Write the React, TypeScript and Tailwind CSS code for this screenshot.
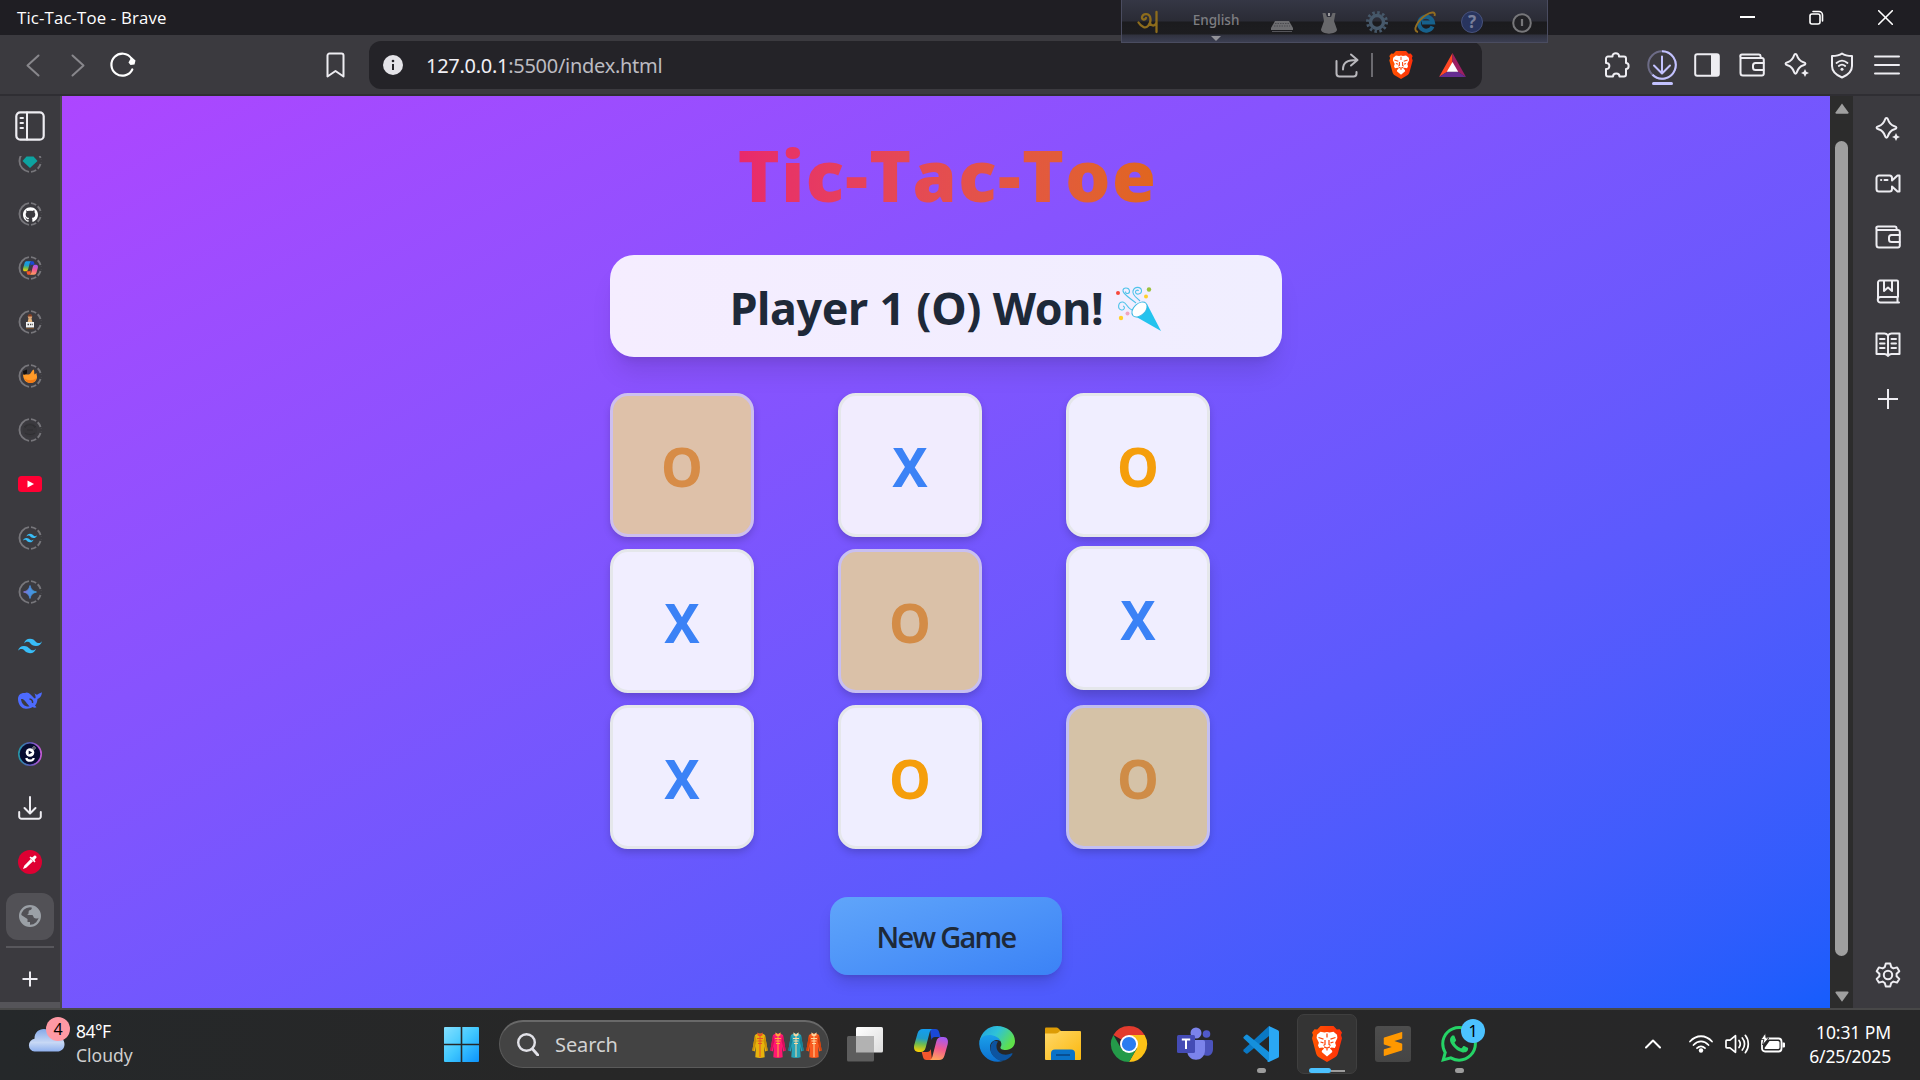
import React from "react";
import { SiGithub, SiTailwindcss, SiWhatsapp, SiSublimetext } from "react-icons/si";

type IconProps = { w: number; h: number; vb?: string; className?: string; children: React.ReactNode };

function Line({ w, h, vb, className = "", children }: IconProps) {
  return (
    <svg
      width={w}
      height={h}
      viewBox={vb ?? `0 0 ${w} ${h}`}
      preserveAspectRatio="none"
      fill="none"
      stroke="currentColor"
      strokeWidth={2}
      strokeLinecap="round"
      strokeLinejoin="round"
      className={`shrink-0 ${className}`}
    >
      {children}
    </svg>
  );
}

function Art({ w, h, vb, className = "", children }: IconProps) {
  return (
    <svg width={w} height={h} viewBox={vb ?? `0 0 ${w} ${h}`} className={`shrink-0 overflow-visible ${className}`}>
      {children}
    </svg>
  );
}

/* ---------- shared drawings ---------- */

function Lion({ w, h, id }: { w: number; h: number; id: string }) {
  return (
    <Art w={w} h={h} vb="0 0 30 36">
      <defs>
        <linearGradient id={id} x1="0" x2="1">
          <stop offset="0" stopColor="#ff5500" />
          <stop offset="1" stopColor="#ff2f0a" />
        </linearGradient>
      </defs>
      <path
        d="M8.5 0h13l3.3 3.6 2.7-.4 2.5 3.2-1 2.6 1 3.2-4.2 15.6c-.5 1.6-1.3 2.5-2.7 3.5L15 36l-8.1-4.7c-1.4-1-2.2-1.9-2.7-3.5L0 12.2 1 9 0 6.4l2.5-3.2 2.7.4z"
        fill={`url(#${id})`}
      />
      <path
        d="M5 8.8 8.5 5.7l4 .7L15 5.9l2.5.5 4-.7L25 8.8l.4 3.2-2.3 4.8.9 2.8-1.2 2.5-3.3-.7-1.7 1.2 2.2 1.9.3 1.6L15 30.4 9.7 26.1l.3-1.6 2.2-1.9-1.7-1.2-3.3.7L6 19.6l.9-2.8L4.6 12z"
        fill="#fff"
      />
      <path
        d="M6.5 11.5l5 1.600M23.5 11.5l-5 1.600M15 7.500v4M13 14v4.500l-1.500 1M17 14v4.500l1.500 1M12 20.800l3 1.200 3-1.200M15 22v2.500M8.500 16l3 .9M21.500 16l-3 .9"
        stroke="#ff4a10"
        strokeWidth="1.3"
        fill="none"
      />
    </Art>
  );
}

const Sparkle = ({ s = 26 }: { s?: number }) => (
  <Line w={s} h={s} vb="0 0 26 26">
    <path d="M11.500 2c.7 0 1.200.5 1.500 1.500C14.200 7.500 15.500 9 19.500 10.200c2.600.7 2.600 2.300 0 3-4 1.200-5.300 2.700-6.500 6.700-.7 2.300-2.300 2.300-3 0-1.200-4-2.500-5.500-6.500-6.700-2.600-.7-2.600-2.300 0-3C7.500 9 8.800 7.500 10 3.500 10.300 2.500 10.800 2 11.500 2z" />
    <path d="M21 17l1.300 2.800L25 21l-2.700 1.300L21 25l-1.300-2.700L17 21l2.700-1.200z" fill="currentColor" stroke="none" />
  </Line>
);

const Wallet = () => (
  <Line w={26} h={24}>
    <path d="M1.500 4v16a2.500 2.500 0 0 0 2.500 2.500h19a1.800 1.800 0 0 0 1.800-1.800V6.800A1.800 1.800 0 0 0 23 5H3A1.600 1.600 0 0 1 3 1.500h17A1.800 1.800 0 0 1 21.600 3.300V5" />
    <path d="M24.500 10h-8a2.500 2.500 0 0 0-2.500 2.500v2a2.500 2.500 0 0 0 2.500 2.500h8" />
  </Line>
);

const Ring = ({ children }: { children?: React.ReactNode }) => (
  <Art w={24} h={24}>
    <path d="M11 1.100A11 11 0 0 0 11 22.900" fill="none" stroke="#77767b" strokeWidth="1.9" />
    <path d="M13 1.100A11 11 0 0 1 22.900 11" fill="none" stroke="#77767b" strokeWidth="1.9" strokeDasharray="5.500 2" />
    <path d="M13 22.900A11 11 0 0 0 22.900 13" fill="none" stroke="#77767b" strokeWidth="1.9" strokeDasharray="5.500 2" />
    {children}
  </Art>
);

const CopilotShape = ({ w, h, id }: { w: number; h: number; id: string }) => (
  <Art w={w} h={h} vb="0 0 34 31">
    <defs>
      <linearGradient id={`${id}a`} x1="0.400" y1="0" x2="0.300" y2="1">
        <stop offset="0" stopColor="#149df0" />
        <stop offset=".4" stopColor="#1f9ccb" />
        <stop offset=".65" stopColor="#6cbb52" />
        <stop offset="1" stopColor="#ffd000" />
      </linearGradient>
      <linearGradient id={`${id}b`} x1="0.600" y1="0" x2="0.400" y2="1">
        <stop offset="0" stopColor="#a259f5" />
        <stop offset=".5" stopColor="#f25a90" />
        <stop offset="1" stopColor="#ffa35c" />
      </linearGradient>
    </defs>
    <path d="M16 0h5.500c2 0 3 1.200 3.600 3l1.400 5H21c-2 0-3 1-3.600 3z" fill="#1b48d6" />
    <path d="M18 31h-5.500c-2 0-3-1.200-3.500-3l-1.300-5H13c2 0 3.200-1.200 3.800-3z" fill="#f4572d" />
    <path d="M9 0h10c-2 0-2.800 1.500-3.400 3.500L11.700 18.500c-.8 2.900-2.200 4.500-5.200 4.500H4.500C.5 23-.6 19.500.3 15.800L3.500 4.500C4.400 1.500 6 0 9 0z" fill={`url(#${id}a)`} />
    <path d="M25 31H15c2 0 2.800-1.500 3.400-3.500L22.300 12.500c.8-2.900 2.200-4.500 5.200-4.500h2c4 0 5.100 3.500 4.200 7.200L30.500 26.500C29.600 29.500 28 31 25 31z" fill={`url(#${id}b)`} />
  </Art>
);

/* ---------- title bar ---------- */

function LanguageBar() {
  return (
    <div className="absolute left-[1121px] top-0 z-10 h-[43px] w-[427px] border border-t-0 border-[#4a4c60] bg-[linear-gradient(180deg,#353745_0px,#2a2b35_21px,#1b1b1e_22px,#1d1d20_34px,#30323f_35px,#3d4054_43px)]">
      <div className="flex h-full items-start text-[#7e7e82]">
        <Art w={22} h={22} className="ml-[15px] mt-[11px]">
          <path d="M5 6C6 2 13 1.500 13.500 8c.3 6-4 9.500-7 8-2-1-3.500-2-5-4.500M13.500 13c3 3 5 1 6-1.500M5 6c-.5 3 3.500 3.500 4 .8M19.500 1v20" fill="none" stroke="#8d6c1c" strokeWidth="2.300" strokeLinecap="round" />
        </Art>
        <div className="ml-[34px] flex w-[46px] flex-col items-center">
          <span className="mt-[10px] whitespace-nowrap font-['Noto_Sans',sans-serif] text-[13.500px] leading-[20px] font-medium">English</span>
          <Art w={10} h={5} className="mt-[6px]"><path d="M0 0h10L5 5z" fill="#929298" /></Art>
        </div>
        <Art w={22} h={11} className="ml-[32px] mt-[21px]">
          <path d="M4 0h14l4 7v2H0V7z" fill="#6d6d70" />
          <path d="M1 10.500h20" stroke="#55555a" />
          <path d="M4 2.500h14M3 5h16" stroke="#4b4b4f" strokeDasharray="1.500 1" />
        </Art>
        <Art w={16} h={21} className="ml-[28px] mt-[13px]">
          <path d="M1.500 0h3l1.500 4h4l1.500-4h3L13 8l3 8.500c0 5.500-16 5.500-16 0L3 8z" fill="#68686b" />
          <path d="M7 0h2v3H7z" fill="#9c9c9f" />
        </Art>
        <Art w={22} h={22} className="ml-[29px] mt-[11px]">
          <circle cx="11" cy="11" r="6.500" fill="none" stroke="#46586a" strokeWidth="3.500" />
          <circle cx="11" cy="11" r="9.500" fill="none" stroke="#46586a" strokeWidth="3" strokeDasharray="2.500 2.470" />
        </Art>
        <Art w={24} h={22} className="ml-[26px] mt-[11px]">
          <path d="M18.500 15.500A7 7 0 1 1 19 11.500H8" fill="none" stroke="#17618c" strokeWidth="4" />
          <path d="M4 21C-2 20 3 10 12 4c6-4 10-3 8.500 1" fill="none" stroke="#936d20" strokeWidth="1.900" />
        </Art>
        <div className="ml-[23px] mt-[11px] flex h-[22px] w-[22px] items-center justify-center rounded-full border border-[#47527c] bg-[#28345e] font-['Noto_Sans',sans-serif] text-[17px] font-bold text-[#7a809c]">?</div>
        <Art w={20} h={20} className="ml-[29px] mt-[13px]">
          <circle cx="10" cy="10" r="8.800" fill="#222226" stroke="#77777a" strokeWidth="2" />
          <path d="M10 6v7" stroke="#77777a" strokeWidth="2.200" />
        </Art>
      </div>
    </div>
  );
}

function TitleBar() {
  return (
    <div className="flex h-[35px] shrink-0 items-center bg-[#1f1e23] text-white">
      <span className="ml-[17px] flex-1 font-['Open_Sans',sans-serif] text-[16.800px] leading-[35px] tracking-[0.150px]">Tic-Tac-Toe - Brave</span>
      <div className="mr-[27px] flex items-center gap-[54px]">
        <Line w={15} h={15}><path d="M0 7h15" strokeLinecap="butt" /></Line>
        <Line w={15} h={15}>
          <rect x="1" y="4" width="10" height="10" rx="2" strokeWidth="1.600" />
          <path d="M4 1.500h6a3.500 3.500 0 0 1 3.500 3.500v6" strokeWidth="1.600" />
        </Line>
        <Line w={15} h={15}><path d="M.7.7l13.600 13.600M14.300.7L.7 14.300" strokeWidth="1.600" /></Line>
      </div>
    </div>
  );
}

/* ---------- toolbar ---------- */

function Toolbar() {
  return (
    <div className="flex h-[61px] shrink-0 items-center border-b-2 border-[#2f2e33] bg-[#3b3a3f] pt-px text-[#eeedf2]">
      <Line w={14} h={23} className="ml-[26px] text-[#88878c]"><path d="M12.500 1.500L1.500 11.500l11 10" /></Line>
      <Line w={14} h={23} className="ml-[31px] text-[#88878c]"><path d="M1.500 1.500l11 10-11 10" /></Line>
      <Art w={26} h={25} className="ml-[25px] -mt-px text-white">
        <path d="M22.300 17.500A11 11 0 1 1 21.500 6.500" fill="none" stroke="#fff" strokeWidth="2.200" strokeLinecap="round" />
        <path d="M18.500 10.500l3-5.500 4 3.500-1 4-4 .5z" fill="#fff" />
      </Art>
      <Line w={19} h={26} className="ml-[190px]"><path d="M1.500 3.500a2 2 0 0 1 2-2h12a2 2 0 0 1 2 2V24.500L9.500 19l-8 5.500z" /></Line>
      <div className="ml-[24px] flex h-[48px] w-[1113px] items-center rounded-[12px] bg-[#242328]">
        <Art w={20} h={20} className="ml-[14px]">
          <circle cx="10" cy="10" r="10" fill="#e4e3e8" />
          <path d="M10 9v6" stroke="#242328" strokeWidth="2" />
          <circle cx="10" cy="6" r="1.300" fill="#242328" />
        </Art>
        <span className="ml-[23px] mt-px flex-1 font-['Noto_Sans',sans-serif] text-[20px] leading-[30px] tracking-[-0.280px] text-[#bcbbc1]">
          <span className="text-[#f0eff4]">127.0.0.1</span>:5500/index.html
        </span>
        <Line w={24} h={25} className="text-[#b9b8bd]">
          <path d="M1.500 8v12.500a3 3 0 0 0 3 3h14a3 3 0 0 0 3-3V19M8 16.500C8 9.500 12 7 22 7M16 1.500L22.500 7 16 12.500" />
        </Line>
        <div className="ml-[12px] h-[24px] w-[2px] bg-[#6b6a70]" />
        <div className="ml-[16px]"><Lion w={24} h={28} id="lion-bar" /></div>
        <Art w={27} h={24} className="ml-[26px] mr-[16px]">
          <path d="M13.500 0L0 24l13.500-8.500z" fill="#ff4724" />
          <path d="M13.500 0L27 24l-13.500-8.500z" fill="#9e1f63" />
          <path d="M0 24h27l-8.500-5.500h-10z" fill="#662d91" />
          <path d="M13.500 9l5.700 9.700H7.800z" fill="#fff" />
        </Art>
      </div>
      <div className="ml-[122px] flex items-center">
        <Line w={26} h={26}>
          <path d="M2 6.500a2 2 0 0 1 2-2h4.500C8 0 15.500 0 15 4.500H20a2 2 0 0 1 2 2V11c3.500 0 3.500 6 0 6v5.500a2 2 0 0 1-2 2h-4.500c0-4-6.500-4-6.500 0H4a2 2 0 0 1-2-2V17c4.500.5 4.500-6.500 0-6z" />
        </Line>
        <div className="ml-[17px] mt-[5px] flex flex-col items-center">
          <Line w={30} h={30} className="text-[#c3c2ff]">
            <circle cx="15" cy="15" r="13.700" stroke="#6d6c87" />
            <path d="M15 1.300a13.700 13.700 0 1 1-9.500 23.500" strokeLinecap="butt" />
            <path d="M15 6.500v16.500M7 15.500l8 8 8-8" />
          </Line>
          <div className="mt-[2px] h-[3px] w-[21px] rounded bg-[#c3c2ff]" />
        </div>
        <Line w={26} h={24} className="ml-[17px]">
          <rect x="1.200" y="1.200" width="23.600" height="21.600" rx="2" />
          <path d="M17 1h8v22h-8z" fill="currentColor" stroke="none" />
        </Line>
        <div className="ml-[19px]"><Wallet /></div>
        <div className="ml-[19px]"><Sparkle /></div>
        <Line w={24} h={27} className="ml-[20px]">
          <path d="M12 1.500c2.500 1.800 6.500 2.500 10 2.500v10c0 5.500-4 9-10 11.500C6 23 2 19.500 2 14V4c3.500 0 7.500-.7 10-2.500z" />
          <path d="M6.500 11c3.500-3 7.500-3 11 0M8.800 14c2-1.700 4.400-1.700 6.400 0" strokeWidth="1.800" />
          <circle cx="12" cy="17.200" r="1.500" fill="currentColor" stroke="none" />
        </Line>
        <Line w={26} h={20} className="ml-[20px]"><path d="M1 1.500h24M1 10h24M1 18.500h24" /></Line>
      </div>
    </div>
  );
}

/* ---------- left vertical tabs ---------- */

function Tab({ children }: { children: React.ReactNode }) {
  return <div className="flex h-[54px] w-full shrink-0 items-center justify-center">{children}</div>;
}

function LeftTabs() {
  return (
    <div className="flex w-[62px] shrink-0 flex-col border-r-2 border-[#49484d] bg-[#3b3a3f] text-[#eeedf2]">
      <div className="flex h-[59px] shrink-0 justify-center pt-[15px]">
        <Line w={30} h={30}>
          <rect x="1.300" y="1.300" width="27.400" height="27.400" rx="4" strokeWidth="2.200" />
          <path d="M12 1.500v27M5.500 7h2.500M5.500 12h2.500M5.500 17h2.500" />
        </Line>
      </div>
      <div className="flex h-[33px] shrink-0 items-end justify-center overflow-hidden">
        <div className="mb-[15px] h-[17px] overflow-hidden">
          <div className="-mt-[7px]">
            <Ring><path d="M12 19L4.500 12 8.500 7.500h7l4 4.500z" fill="#0da3a0" /></Ring>
          </div>
        </div>
      </div>
      <div className="-mt-[1px] flex flex-col">
        <Tab><Ring><foreignObject x="4.500" y="4.500" width="15" height="15"><SiGithub size={15} color="#fff" /></foreignObject></Ring></Tab>
        <Tab>
          <div className="relative"><Ring /><div className="absolute inset-0 flex items-center justify-center"><CopilotShape w={15} h={14} id="cpt" /></div></div>
        </Tab>
        <Tab>
          <Ring>
            <circle cx="12" cy="6.800" r="2.200" fill="#e0a878" />
            <path d="M9.800 6.500c0-3.500 4.400-3.500 4.400 0z" fill="#7b3b22" />
            <path d="M10.500 8.500h3l1 4h-5z" fill="#e2b27c" />
            <path d="M8 12h8v5.500H8z" fill="#f2f2f2" />
            <path d="M9.500 14.500h1.500m1 0h1m.7 0h1" stroke="#444" strokeWidth="1.500" />
            <path d="M8 18.500h8" stroke="#6d4a2c" strokeWidth="1.200" />
          </Ring>
        </Tab>
        <Tab>
          <Ring>
            <path d="M5 10c0 5 2.500 9 7.500 9 4 0 6.500-2.800 6.500-6 0-1.500-.5-2-.5-4l-2 1.500c-.5-2 0-3.500-.7-5-2 .7-2.300 3-3.800 4.500-2 1-4.500.5-7 0z" fill="#ff9a28" />
            <path d="M5 7l4-1.500v4L5.500 11z" fill="#111" />
            <path d="M6.500 14c3 3 8 3 12 0-1 3-3 5-6 5-3 0-5-2-6-5z" fill="#f47b16" />
          </Ring>
        </Tab>
        <Tab>
          <Ring>
            <circle cx="12" cy="12" r="7" fill="#38373b" />
            <path d="M6 9c3-3 9-3 12 0M9 12h6M7 15c3 2 7 2 10 0M9 7l-2 3M15 7l2 3" stroke="#2f2f32" fill="none" />
          </Ring>
        </Tab>
        <Tab>
          <Art w={24} h={16}><rect width="24" height="16" rx="3.500" fill="#ff0033" /><path d="M9.500 4.500l6.500 3.500-6.500 3.500z" fill="#fff" /></Art>
        </Tab>
        <Tab><div className="relative"><Ring /><SiTailwindcss size={14} className="absolute left-[5px] top-[5px] text-[#38bdf8]" /></div></Tab>
        <Tab>
          <Ring>
            <defs><linearGradient id="gem" x1="0" x2="1"><stop offset="0" stopColor="#8a72d8" /><stop offset=".5" stopColor="#4a8fe0" /><stop offset="1" stopColor="#3aa0dc" /></linearGradient></defs>
            <path d="M12 5.500c1 4 2.500 5.500 6.500 6.500-4 1-5.500 2.500-6.500 6.500-1-4-2.500-5.500-6.500-6.500 4-1 5.500-2.500 6.500-6.500z" fill="url(#gem)" stroke="url(#gem)" strokeWidth=".8" />
          </Ring>
        </Tab>
        <Tab><SiTailwindcss size={24} className="text-[#38bdf8]" /></Tab>
        <Tab>
          <Art w={24} h={18}>
            <path d="M0 8C0 3.500 3.500 1.500 7 2c2-1.300 4 0 5 1 3 2.500 3.500 4 5 4.500C18.500 7 17 4 16.500 2c1.500 2 3 2.200 4.500.5 1-.3 2-.7 3-1.200-.3 4-2.500 6.300-4.500 6.700-.2 3-1 5-2.500 6.500l1.500 1.800c-1.500.7-3 .2-4-.3-2 1.500-5 2-8 1.500C3 17 0 13 0 8z" fill="#4d6bfe" />
            <path d="M3 8c3-.5 4.500 2.500 6.500 5l2 2.500c-4.500.5-8-2.500-8.500-7.500z" fill="#3b3a3f" />
            <path d="M11.500 8c2 .3 3.500 1.800 3 4" fill="none" stroke="#3b3a3f" strokeWidth="1.500" />
          </Art>
        </Tab>
        <Tab>
          <Art w={24} h={24}>
            <defs><linearGradient id="gring" x1="0" x2="1"><stop offset="0" stopColor="#2595a8" /><stop offset=".5" stopColor="#5a56b8" /><stop offset="1" stopColor="#c45ad8" /></linearGradient></defs>
            <circle cx="12" cy="12" r="11.200" fill="#070b30" stroke="url(#gring)" strokeWidth="1.600" />
            <circle cx="12" cy="10.500" r="4.300" fill="#fff" />
            <path d="M10.700 8.500l3.500 2-3.500 2z" fill="#070b30" />
            <path d="M8.300 16c.5 3.600 7 3.600 7.400 0" fill="none" stroke="#fff" strokeWidth="2.200" />
            <circle cx="16" cy="6" r="1.300" fill="none" stroke="#999" />
          </Art>
        </Tab>
        <Tab><Line w={24} h={24}><path d="M12 1v16M6.500 12l5.500 5.500 5.500-5.500M1.200 16v4.500a2.300 2.300 0 0 0 2.300 2.300h17a2.300 2.300 0 0 0 2.300-2.300V16" /></Line></Tab>
        <Tab>
          <Art w={24} h={24}>
            <circle cx="12" cy="12" r="12" fill="#de0032" />
            <path d="M5 19l1.200-3.200 6.500-6.800 2.300 2.300-6.800 6.500z" fill="#fff" />
            <path d="M11.500 7.500l5 5 1-1-1-1.500 2.300-3-1.800-1.800-3 2.300-1.500-1z" fill="#fff" />
          </Art>
        </Tab>
        <Tab>
          <div className="flex h-[47px] w-[48px] items-center justify-center rounded-[12px] bg-[#525156]">
            <Art w={22} h={22}>
              <circle cx="11" cy="11" r="9.900" fill="none" stroke="#9ba0a6" strokeWidth="2.200" />
              <path d="M13 1.500c0 2.500-.5 3.500-3 4C9 7.500 10.500 9 8 10h5.500c1.500 2 .5 3 3.500 3.500 2 0 3.500-.5 4-2.500C21 5.500 18 2 13 1.500zM1.500 9.500L8.500 14v3h2.500v3.800C5 21 .5 16 1.500 9.500z" fill="#9ba0a6" />
            </Art>
          </div>
        </Tab>
      </div>
      <div className="ml-[6px] mt-[3px] h-[2px] w-[48px] shrink-0 bg-[#58575c]" />
      <div className="flex flex-1 items-center justify-center pb-[9px]">
        <Line w={16} h={16} className="mt-[16px]"><path d="M8 .5v15M.5 8h15" strokeLinecap="butt" /></Line>
      </div>
      <div className="h-[6px] w-full shrink-0 bg-[#555459]" />
    </div>
  );
}

/* ---------- game ---------- */

type Mark = "X" | "O";
const cells: { mark: Mark; cls: string }[] = [
  { mark: "O", cls: "bg-[#dec1a9] border-[#cdbfef] text-[#d78c47]" },
  { mark: "X", cls: "bg-[#f1ecfe] border-[#e5e7eb] text-[#3b82f6]" },
  { mark: "O", cls: "bg-[#f0eeff] border-[#e5e7eb] text-[#f59e0b]" },
  { mark: "X", cls: "bg-[#f1eeff] border-[#e5e7eb] text-[#3b82f6]" },
  { mark: "O", cls: "bg-[#dac1a8] border-[#c8bff1] text-[#d38c47]" },
  { mark: "X", cls: "bg-[#f0eeff] border-[#e5e7eb] text-[#3b82f6] -translate-y-[3px] shadow-[0_8px_14px_-2px_rgba(0,0,0,0.22)]" },
  { mark: "X", cls: "bg-[#f0eeff] border-[#e5e7eb] text-[#3b82f6]" },
  { mark: "O", cls: "bg-[#efeeff] border-[#e5e7eb] text-[#f59e0b]" },
  { mark: "O", cls: "bg-[#d5c2a7] border-[#c3bff2] text-[#cf8c47]" },
];

const PartyPopper = () => (
  <Art w={46} h={46} className="mt-[5px]">
    <g fill="none" stroke="#4ec3ea" strokeWidth="1.100">
      <path d="M20 17C14 12 8 9 7 5c-.5-4 6-4 6.500 0 .3 3-4 3.500-4 .5" />
      <path d="M24 15c-4-4-8-6-7-10 1.500-5 8-4.500 8.500-.5.300 4-6 5-6 1.500 0-2 2.500-2.500 3-1" />
      <path d="M17 24C12 24 11 17 7 16c-5-.5-6 7-1.500 8 3 .5 4-3.500 1.500-4" />
    </g>
    <path d="M17 29L31 18l14 27z" fill="#23c3ee" />
    <ellipse cx="23.500" cy="23.500" rx="9" ry="5.800" transform="rotate(-44 23.500 23.500)" fill="#fff" stroke="#3cb9e3" strokeWidth="1" />
    <circle cx="2" cy="7" r="2" fill="#f7483c" />
    <circle cx="33" cy="3.500" r="2.200" fill="#9bc13c" />
    <circle cx="30" cy="10.500" r="2" fill="#ffd02b" />
    <circle cx="11.500" cy="27.500" r="2" fill="#f0a5c0" />
    <circle cx="5" cy="32" r="2.200" fill="#ffd02b" />
  </Art>
);

function Game() {
  return (
    <div className="flex flex-1 flex-col items-center overflow-hidden bg-linear-to-br from-[#ad46ff] to-[#155dfc] font-['Noto_Sans',sans-serif]">
      <h1 className="mt-[43px] bg-linear-to-r from-[#e8286c] to-[#e0661c] bg-clip-text pl-[3px] font-['Open_Sans',sans-serif] text-[71px] leading-[72px] font-extrabold tracking-[1.400px] text-transparent">
        Tic-Tac-Toe
      </h1>
      <div className="mt-[44px] flex h-[102px] w-[672px] shrink-0 items-center justify-center gap-[13px] rounded-[24px] bg-linear-to-r from-[#f5edff] to-[#f0eeff] text-[#1e2939] shadow-[0_20px_25px_-5px_rgba(0,0,0,0.1),0_8px_10px_-6px_rgba(0,0,0,0.1)]">
        <span className="mt-[4px] text-[44.800px] leading-[50px] font-bold tracking-[-0.400px] [word-spacing:0.500px]">Player 1 (O) Won!</span>
        <PartyPopper />
      </div>
      <div className="mt-[36px] grid w-[672px] shrink-0 grid-cols-3 gap-3">
        {cells.map((c, i) => (
          <div
            key={i}
            className={`flex h-[144px] w-[144px] items-center justify-center rounded-[18px] border-[3px] text-[53px] leading-[60px] font-bold shadow-[0_4px_8px_-1px_rgba(0,0,0,0.2)] ${c.cls}`}
          >
            <span className="mt-[4px]">{c.mark}</span>
          </div>
        ))}
      </div>
      <button className="mt-[48px] h-[78px] w-[232px] shrink-0 rounded-[18px] bg-linear-to-br from-[#60a5fa] to-[#3b82f6] pt-[2px] font-['Open_Sans',sans-serif] text-[29px] leading-[40px] font-semibold tracking-[-1.750px] text-[#1e2939] shadow-[0_10px_15px_-3px_rgba(0,0,0,0.15),0_4px_6px_-4px_rgba(0,0,0,0.15)]">
        New Game
      </button>
    </div>
  );
}

function ScrollBar() {
  return (
    <div className="flex w-[23px] shrink-0 flex-col items-center bg-[#2c2c2c] pt-[7px] pb-[6px]">
      <Art w={14} h={11}><path d="M7 .5L13.500 9.500q.3 1.300-1 1.300H1.500q-1.300 0-1-1.300z" fill="#9f9f9f" /></Art>
      <div className="mt-[27px] h-[815px] w-[13px] rounded-full bg-[#9f9f9f]" />
      <Art w={14} h={11} className="mt-auto"><path d="M7 10.800L.5 1.800Q.2.500 1.500.500h11q1.300 0 1 1.300z" fill="#9f9f9f" /></Art>
    </div>
  );
}

/* ---------- right sidebar ---------- */

function RightBar() {
  return (
    <div className="flex w-[67px] shrink-0 flex-col items-center bg-[#3b3a3f] pt-[6px] pl-[2px] text-[#eeedf2]">
      <Tab><Sparkle /></Tab>
      <Tab>
        <Line w={26} h={19}>
          <path d="M1.500 4A2.500 2.500 0 0 1 4 1.500h10.500A2.500 2.500 0 0 1 17 4v2.500l5.500-5h2v16h-2L17 12.500V15a2.500 2.500 0 0 1-2.500 2.500H4A2.500 2.500 0 0 1 1.500 15z" />
          <path d="M6 6h.3M9.500 6h3" />
        </Line>
      </Tab>
      <Tab><Wallet /></Tab>
      <Tab>
        <Line w={24} h={25}>
          <path d="M2 20.500v-17a2 2 0 0 1 2-2h17a1 1 0 0 1 1 1V18H4.500a2.500 2.500 0 0 0 0 5.500H23M21.500 18v5.500M8 1.500V12l4-3.500 4 3.500V1.500" />
        </Line>
      </Tab>
      <Tab>
        <Line w={26} h={26}>
          <path d="M13 3.500C12 2 11 1.500 9.500 1.500H1.500V22h8c1.500 0 2.500.5 3.500 2 1-1.500 2-2 3.500-2h8V1.500h-8c-1.500 0-2.500.5-3.500 2zM13 3.500V24" />
          <path d="M5 7h4.500M5 11.500h4.500M5 16h4.500M16.500 7H21M16.500 11.500H21M16.500 16H21" />
        </Line>
      </Tab>
      <Tab><Line w={20} h={20}><path d="M10 .5v19M.5 10h19" /></Line></Tab>
      <div className="mt-auto mb-[20px]">
        <Line w={26} h={26}>
          <path d="M10.800 1.500h4.400l1 3.600 2.200 1.300 3.700-1 2.200 3.800-2.700 2.600v2.500l2.700 2.600-2.200 3.700-3.700-1-2.200 1.400-1 3.500h-4.400l-1-3.500-2.200-1.400-3.700 1-2.200-3.700 2.700-2.600v-2.500L1.700 9.200l2.200-3.800 3.700 1 2.200-1.300z" />
          <circle cx="13" cy="13" r="4.200" />
        </Line>
      </div>
    </div>
  );
}

/* ---------- taskbar ---------- */

function Slot({ children, dot = false }: { children: React.ReactNode; dot?: boolean }) {
  return (
    <div className="flex h-full w-[66px] shrink-0 flex-col items-center pt-[16px]">
      <div className="flex h-[36px] items-center">{children}</div>
      {dot && <div className="mt-[6px] h-[5px] w-[9px] rounded-full bg-[#9c9c9c]" />}
    </div>
  );
}

const coats = [
  ["#e8b30c", "#c98f08", "#e8502a"],
  ["#ff1772", "#d60f5c", "#ffb03a"],
  ["#28a3b8", "#177f94", "#ffd9a0"],
  ["#fa5a1e", "#d1400c", "#ffd9a0"],
];

const Coat = ({ c }: { c: string[] }) => (
  <Art w={16} h={26}>
    <path d="M5.500 1.500L3 3 .3 18.500l2.500 1L4 14l-.7 11.300c3 .9 6.400.9 9.400 0L12 14l1.200 5.500 2.500-1L13 3l-2.500-1.500z" fill={c[0]} />
    <path d="M3 3L.3 18.500l1.300.5L4.500 9zM13 3l2.700 15.500-1.300.5L11.500 9z" fill={c[1]} />
    <path d="M5.500.3L8 2.500 10.500.3v3L8 4.500 5.500 3.300zM7.500 4h1v21h-1zM5 6h6v.9H5zM5.500 8.500h5v.9h-5zM6 11h4v.9H6z" fill={c[2]} />
  </Art>
);

function Taskbar() {
  return (
    <div className="flex h-[72px] shrink-0 border-t-2 border-[#484848] bg-linear-to-r from-[#25282a] via-[#272727] via-30% to-[#272728] font-['Noto_Sans',sans-serif] text-white">
      <div className="relative flex w-[428px] shrink-0">
        <Art w={37} h={24} className="ml-[28px] mt-[18px]">
          <defs><linearGradient id="cloud" x1="0" y1="0" x2="0" y2="1"><stop offset="0" stopColor="#84a8e8" /><stop offset=".6" stopColor="#c7d8f5" /><stop offset="1" stopColor="#8fb0ee" /></linearGradient></defs>
          <path d="M6.500 23.500a6.400 6.400 0 0 1 0-12.700C6.500 4.500 10.500 1 16 1c5.500 0 9 3.500 9.500 8.500 1-.4 2-.5 3.500-.5 4.500 0 7.500 3 7.500 7.200s-3 7.300-7.500 7.300z" fill="url(#cloud)" />
        </Art>
        <div className="absolute left-[46px] top-[7px] flex h-[24px] w-[24px] items-center justify-center rounded-full bg-[#ff99a4] text-[16px] leading-none text-black">4</div>
        <div className="ml-[11px] mt-[9px] text-[17.500px] leading-[24px]">
          <div className="tracking-[-0.500px]">84°F</div>
          <div className="text-[#cfcfcf]">Cloudy</div>
        </div>
      </div>
      <Slot>
        <Art w={35} h={35}>
          <defs><linearGradient id="win" x1="0" y1="0" x2="1" y2="1"><stop offset="0" stopColor="#84e0ff" /><stop offset=".5" stopColor="#40c8ff" /><stop offset="1" stopColor="#0c93fb" /></linearGradient></defs>
          <path d="M1 0h15.700v16.700H0V1q0-1 1-1zM18.300 0H34q1 0 1 1v15.700H18.300zM0 18.300h16.700V35H1q-1 0-1-1zM18.300 18.300H35V34q0 1-1 1H18.300z" fill="url(#win)" />
        </Art>
      </Slot>
      <div className="ml-[5px] mt-[10px] flex h-[48px] w-[330px] shrink-0 items-center rounded-full border border-t-2 border-[#5a5a5a] border-t-[#696969] bg-[#434343]">
        <Line w={22} h={23} className="ml-[17px] text-[#e2e2e8]"><circle cx="9.500" cy="9.500" r="8.300" strokeWidth="2.400" /><path d="M15.500 16l5.300 6" strokeWidth="2.800" /></Line>
        <span className="ml-[16px] flex-1 text-[20px] leading-[28px] tracking-[-0.100px] text-[#d2d2d2]">Search</span>
        <div className="mr-[6px] mt-[1px] flex gap-[2px]">{coats.map((c, i) => <Coat key={i} c={c} />)}</div>
      </div>
      <div className="ml-[3px] flex">
        <Slot>
          <Art w={36} h={35}>
            <defs><linearGradient id="tv" x1="0" y1="0" x2="1" y2="1"><stop offset="0" stopColor="#fff" /><stop offset="1" stopColor="#dcdcdc" /></linearGradient></defs>
            <rect x="9" y="0" width="27" height="25.500" rx="1.500" fill="url(#tv)" />
            <rect x="0" y="9" width="27" height="25.500" rx="1.500" fill="#5d5d5d" />
            <path d="M9 9h18v16.500H9z" fill="#b2b2b2" />
          </Art>
        </Slot>
        <Slot><CopilotShape w={34} h={31} id="cp" /></Slot>
        <Slot>
          <Art w={36} h={36}>
            <defs>
              <linearGradient id="e1" x1="0" y1="0" x2="1" y2=".5"><stop offset="0" stopColor="#1f9fe0" /><stop offset=".5" stopColor="#2fc2d8" /><stop offset="1" stopColor="#5fe04a" /></linearGradient>
              <linearGradient id="e2" x1="0" y1="0" x2="0" y2="1"><stop offset="0" stopColor="#1ba0ea" /><stop offset="1" stopColor="#0c6fcf" /></linearGradient>
            </defs>
            <path d="M.3 16C2 6.500 9 0 18 0c10 0 18 6.500 18 15 0 5.500-4 9-9 9-4 0-6-1.200-5.500-3 1.500-2 1-4.500-.5-6.500C16 8.500 5 9 .3 16z" fill="url(#e1)" />
            <path d="M.2 18C0 12 5 9 10 9c5.500 0 10 2.500 11.500 6-4-2.500-10-.5-10.500 5.500-.5 7 6 13.500 13 14.500C13 38.500.8 30.500.2 18z" fill="url(#e2)" />
            <path d="M15.500 14.500c-6 4-5.500 13 1.500 18 6 4.500 13 1.500 16.500-4.500.3-.7-.2-1-.8-.7C26 30.500 18 28 17.500 21c-.2-2.500.5-4 1.500-5.500z" fill="#0d54a0" />
          </Art>
        </Slot>
        <Slot>
          <Art w={36} h={34}>
            <defs><linearGradient id="fo" x1="0" y1="0" x2="1" y2="1"><stop offset="0" stopColor="#ffd868" /><stop offset="1" stopColor="#fbb80f" /></linearGradient></defs>
            <path d="M0 1.500Q0 .5 1 .5h10.500q1 0 2 1L16 4v4H0z" fill="#dd9c05" />
            <path d="M0 6.500h10.500q1.500 0 2.500-.8L15 4h20q1 0 1 1v27q0 1-1 1H1q-1 0-1-1z" fill="url(#fo)" />
            <path d="M6 33V26.500q0-4 4-4h16q4 0 4 4V33z" fill="#0a72c8" />
            <path d="M11 28h14" stroke="#084a8c" strokeWidth="1.800" />
          </Art>
        </Slot>
        <Slot>
          <Art w={36} h={36}>
            <path d="M18 18L2.400 9A18 18 0 0 1 33.600 9z" fill="#e33b2e" />
            <path d="M18 9h15.600A18 18 0 0 1 18 36l7.800-13.500z" fill="#fbc116" />
            <path d="M2.400 9A18 18 0 0 0 18 36l7.800-13.500L18 24 10.200 22.500z" fill="#249a49" />
            <circle cx="18" cy="18" r="9" fill="#fff" />
            <circle cx="18" cy="18" r="7.100" fill="#2a7cf0" />
          </Art>
        </Slot>
        <Slot>
          <Art w={36} h={34}>
            <circle cx="29.500" cy="7" r="3.800" fill="#5059c9" />
            <path d="M24 13h10.500Q36 13 36 14.500V22c0 8-9 9-12 3z" fill="#4b53bc" />
            <circle cx="19" cy="6" r="5.500" fill="#7b83eb" />
            <path d="M10 13h16q2 0 2 2v8c0 13-18 13-18 0z" fill="#7b83eb" />
            <rect x="0" y="8" width="18" height="18" rx="1.500" fill="#444bb5" />
            <path d="M4.800 12.500h8.400M9 12.500v9.500" stroke="#fff" strokeWidth="2" />
          </Art>
        </Slot>
        <Slot dot>
          <Art w={36} h={36}>
            <path d="M26 0v10L4.500 27.500Q3.500 28 2.700 27.300L.6 25.300Q-.1 24.500.7 23.600z" fill="#0a78c4" />
            <path d="M26 36V26L4.500 8.800Q3.500 8.200 2.700 9L.6 10.900Q-.1 11.700.7 12.600z" fill="#1590dc" />
            <path d="M26 0l9 4.200q1 .5 1 1.600v24.400q0 1.100-1 1.600L26 36q-1.100 0-2-1l2-1z" fill="#2aa7f4" />
          </Art>
        </Slot>
        <div className="relative ml-[3px] mr-[3px] mt-[4px] flex h-[60px] w-[60px] flex-col items-center rounded-[7px] border border-[#3f3f3f] bg-[#343434] pt-[11px]">
          <Lion w={30} h={36} id="lion-task" />
          <div className="mt-[6px] flex h-[5px] items-center">
            <div className="h-[5px] w-[22px] rounded-full bg-[#4cc2ff]" />
            <div className="h-[2px] w-[14px] bg-[#9c9c9c]" />
          </div>
        </div>
        <Slot>
          <div className="flex h-[36px] w-[36px] items-center justify-center rounded-[3px] bg-linear-to-b from-[#4d4d4d] to-[#454545]">
            <SiSublimetext size={24} color="#ff9800" />
          </div>
        </Slot>
        <Slot dot>
          <div className="relative">
            <SiWhatsapp size={36} color="#25d366" />
            <div className="absolute left-[20px] -top-[7px] flex h-[24px] w-[24px] items-center justify-center rounded-full bg-[#4cc2ff] text-[16px] leading-none text-black">1</div>
          </div>
        </Slot>
      </div>
      <div className="ml-auto flex items-center pb-[2px]">
        <Line w={16} h={10} className="mr-[28px]"><path d="M1 8.500l7-7 7 7" /></Line>
        <Art w={24} h={18} className="mr-[12px]">
          <g fill="none" stroke="#fff" strokeWidth="1.800" strokeLinecap="round">
            <path d="M1 6.500c6.500-7 15.500-7 22 0M4.500 10c4.500-4.800 10.500-4.800 15 0M8 13.200c2.500-2.500 5.500-2.500 8 0" />
          </g>
          <circle cx="12" cy="15.500" r="2.200" fill="#fff" />
        </Art>
        <Art w={24} h={20} className="mr-[12px]">
          <g fill="none" stroke="#fff" strokeWidth="1.700" strokeLinecap="round" strokeLinejoin="round">
            <path d="M1 7v6q0 .8.800.8H5l5.500 4.500V1.700L5 6.200H1.800Q1 6.200 1 7zM14 6.500c1.500 2 1.500 5 0 7M17.300 4c3 3.500 3 8.500 0 12M20.300 1.300c4 5 4 12.500 0 17.400" />
          </g>
        </Art>
        <Art w={24} h={20} className="mr-[25px] mb-[3px]">
          <rect x="1" y="5.500" width="19.500" height="13" rx="3" fill="none" stroke="#fff" strokeWidth="1.800" />
          <path d="M21.500 9.500h1.500q1 0 1 1v3q0 1-1 1h-1.500zM8.500 8H17q1.500 0 1.500 1.500v5q0 1.500-1.500 1.500H4.500Q3.500 16 3.500 15z" fill="#fff" />
          <path d="M4.500 0L0 6.500h3L1.500 12 8 5H5z" fill="#fff" stroke="#272728" strokeWidth=".8" />
        </Art>
        <div className="mr-[29px] -ml-px text-right text-[17.500px] leading-[24px]">
          <div className="tracking-[-0.100px]">10:31 PM</div>
          <div className="tracking-[-0.150px]">6/25/2025</div>
        </div>
      </div>
    </div>
  );
}

export default function App() {
  return (
    <div className="relative flex h-[1080px] w-[1920px] flex-col overflow-hidden bg-[#1f1e23]">
      <TitleBar />
      <LanguageBar />
      <Toolbar />
      <div className="flex h-[912px] shrink-0">
        <LeftTabs />
        <Game />
        <ScrollBar />
        <RightBar />
      </div>
      <Taskbar />
    </div>
  );
}
